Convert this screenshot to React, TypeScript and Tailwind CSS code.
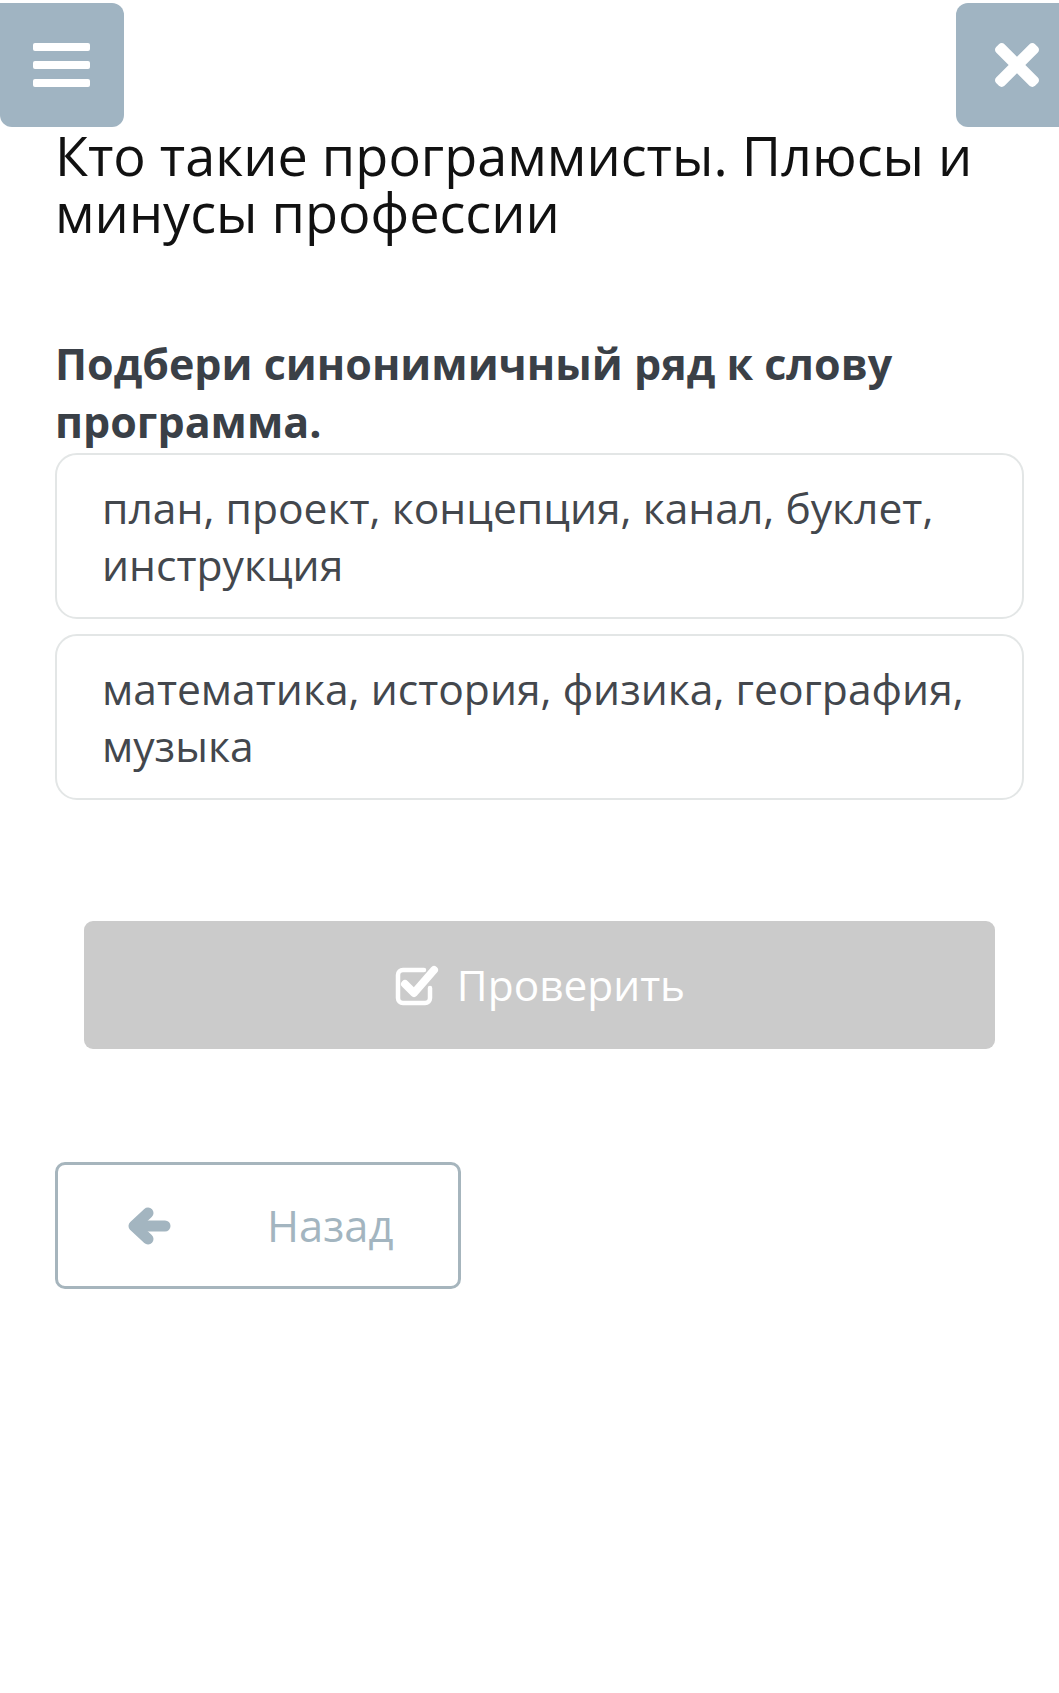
import React from "react";
import { FaTimes } from "react-icons/fa";

function CheckSquareIcon() {
  return (
    <svg width="46" height="42" viewBox="0 0 46 42" fill="none">
      <path
        d="M30 6 H9 a5 5 0 0 0 -5 5 V34 a5 5 0 0 0 5 5 H31 a5 5 0 0 0 5 -5 V24"
        stroke="white"
        strokeWidth="4.5"
        strokeLinecap="round"
        strokeLinejoin="round"
      />
      <path
        d="M11 20 L20 29 L40 6"
        stroke="white"
        strokeWidth="8"
        strokeLinecap="round"
        strokeLinejoin="round"
      />
    </svg>
  );
}

function ArrowLeftIcon() {
  return (
    <svg width="44" height="38" viewBox="0 0 44 38" fill="none">
      <path
        d="M21 6 L7 19 L21 32"
        stroke="#a3b5c0"
        strokeWidth="11"
        strokeLinecap="round"
        strokeLinejoin="round"
      />
      <path d="M9 19 H38" stroke="#a3b5c0" strokeWidth="11" strokeLinecap="round" />
    </svg>
  );
}

export default function App() {
  return (
    <div
      className="w-[1059px] min-h-[1693px] bg-white pt-[3px]"
      style={{ fontFamily: '"Open Sans", "Noto Sans", sans-serif' }}
    >
      <div className="flex justify-between">
        <div className="w-[124px] h-[124px] bg-[#a0b4c2] rounded-r-[12px] rounded-bl-[12px] flex flex-col justify-center items-start pl-[33px] gap-[10px]">
          <div className="w-[57px] h-[8px] bg-white rounded-[2px]" />
          <div className="w-[57px] h-[8px] bg-white rounded-[2px]" />
          <div className="w-[57px] h-[8px] bg-white rounded-[2px]" />
        </div>
        <div className="w-[103px] h-[124px] bg-[#a0b4c2] rounded-l-[12px] flex items-center justify-center pl-[19px]">
          <FaTimes className="text-white" size={64} />
        </div>
      </div>

      <div className="pl-[55px] pr-[35px]">
        <h1 className="text-[54px] leading-[57px] text-[#111111] font-normal">
          Кто такие программисты. Плюсы и минусы профессии
        </h1>

        <p className="mt-[94px] text-[43px] leading-[58px] font-bold text-[#3a4047]">
          Подбери синонимичный ряд к слову программа.
        </p>

        <div className="mt-[2px] flex flex-col gap-[15px]">
          <div className="border-2 border-[#e3e6e6] rounded-[22px] pl-[45px] pr-[30px] pt-[24px] pb-[24px] text-[42.6px] leading-[57px] text-[#43474d]">
            план, проект, концепция, канал, буклет, инструкция
          </div>
          <div className="border-2 border-[#e3e6e6] rounded-[22px] pl-[45px] pr-[30px] pt-[24px] pb-[24px] text-[42.6px] leading-[57px] text-[#43474d]">
            математика, история, физика, география, музыка
          </div>
        </div>

        <div className="mt-[121px] px-[29px]">
          <div className="h-[128px] bg-[#cbcbcb] rounded-[9px] flex items-center justify-center gap-[17px]">
            <CheckSquareIcon />
            <span className="text-[42.4px] text-white leading-none">Проверить</span>
          </div>
        </div>

        <div className="mt-[113px] w-[406px] h-[127px] border-[3px] border-[#a6b5bd] rounded-[10px] flex items-center pl-[69px]">
          <ArrowLeftIcon />
          <span className="ml-[96px] text-[43.5px] text-[#a3b5c0] leading-none">Назад</span>
        </div>
      </div>
    </div>
  );
}
